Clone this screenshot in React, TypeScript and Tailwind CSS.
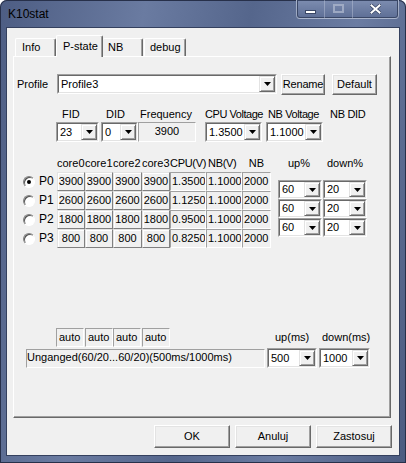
import React from "react";

function Arrow() {
  return (
    <svg width="7" height="4" viewBox="0 0 7 4">
      <path d="M0 0H7L3.5 4Z" fill="#000" />
    </svg>
  );
}

function Combo({ cls, value }: { cls: string; value: string }) {
  return (
    <div className={`flex shrink-0 box-border border border-t-[#a0a0a0] border-l-[#a0a0a0] border-r-white border-b-white ${cls}`}>
      <div className="flex flex-1 min-w-0 box-border border border-t-[#696969] border-l-[#696969] border-r-[#e3e3e3] border-b-[#e3e3e3] bg-white">
        <div className="flex-1 min-w-0 pl-[2px] flex items-center whitespace-nowrap overflow-hidden">{value}</div>
        <div className="w-[16px] shrink-0 box-border bg-[#f0f0f0] border border-t-[#e3e3e3] border-l-[#e3e3e3] border-r-[#696969] border-b-[#696969] shadow-[inset_1px_1px_0_#ffffff,inset_-1px_-1px_0_#a0a0a0] flex items-center justify-center">
          <Arrow />
        </div>
      </div>
    </div>
  );
}

function Btn({ cls, label }: { cls: string; label: string }) {
  return (
    <div className={`flex shrink-0 items-center justify-center box-border bg-[#f0f0f0] border border-t-white border-l-white border-r-[#696969] border-b-[#696969] shadow-[inset_-1px_-1px_0_#a0a0a0,inset_1px_1px_0_#e3e3e3] ${cls}`}>
      {label}
    </div>
  );
}

function Raised({ cls, value }: { cls: string; value: string }) {
  return (
    <div className={`flex shrink-0 items-center justify-center box-border bg-[#f0f0f0] border border-t-[#e3e3e3] border-l-[#e3e3e3] border-r-[#808080] border-b-[#808080] shadow-[inset_1px_1px_0_#ffffff] ${cls}`}>
      {value}
    </div>
  );
}

function Static({ cls, value, inner = "" }: { cls: string; value: string; inner?: string }) {
  return (
    <div className={`flex shrink-0 box-border bg-[#f0f0f0] border border-t-[#a0a0a0] border-l-[#a0a0a0] border-r-white border-b-white whitespace-nowrap overflow-hidden ${cls} ${inner}`}>
      {value}
    </div>
  );
}

function Radio({ on }: { on: boolean }) {
  return (
    <div className="w-[12px] h-[12px] shrink-0 rounded-full box-border border border-t-[#808080] border-l-[#808080] border-r-white border-b-white bg-white flex items-center justify-center shadow-[inset_1px_1px_0_#505050]">
      {on ? <div className="w-[4px] h-[4px] rounded-full bg-black" /> : null}
    </div>
  );
}

const rows = [
  { p: "P0", f: "3900", v: "1.3500", on: true },
  { p: "P1", f: "2600", v: "1.1250", on: false },
  { p: "P2", f: "1800", v: "0.9500", on: false },
  { p: "P3", f: "800", v: "0.8250", on: false },
];

export default function App() {
  return (
    <div className="w-[406px] h-[463px] flex flex-col rounded-t-[7px] overflow-hidden font-['Liberation_Sans',Arial,sans-serif] text-[11px] leading-[13px] text-black bg-[linear-gradient(100deg,#4d5d83_0%,#6a7ba1_30%,#55668c_52%,#6b7ca2_74%,#4b5b80_100%)] shadow-[inset_0_0_0_1px_#27304a]">
      {/* title bar */}
      <div className="h-[28px] flex items-start shrink-0">
        <div className="pl-[8px] pt-[7px] text-[12px] leading-[14px] text-black">K10stat</div>
        <div className="ml-auto mr-[7px] flex h-[19px] rounded-b-[4px] border border-t-0 border-[#d5dbe8]/50 bg-[linear-gradient(180deg,#7d8db0_0%,#5d6e95_100%)] shadow-[inset_0_0_0_1px_#3a4766]">
          <div className="w-[28px] flex items-center justify-center border-r border-[#c9d0e0]/40">
            <div className="w-[11px] h-[4px] mt-[5px] bg-white border border-[#3a4766]" />
          </div>
          <div className="w-[28px] flex items-center justify-center border-r border-[#c9d0e0]/40">
            <div className="w-[11px] h-[9px] border-2 border-[#aab4cb]/80 mb-[2px]" />
          </div>
          <div className="w-[45px] flex items-center justify-center">
            <svg width="11" height="10" viewBox="0 0 11 10">
              <path d="M1 1L10 9M10 1L1 9" stroke="#3a4766" strokeWidth="3.4" strokeLinecap="square" />
              <path d="M1.5 1.5L9.5 8.5M9.5 1.5L1.5 8.5" stroke="#ffffff" strokeWidth="2" strokeLinecap="square" />
            </svg>
          </div>
        </div>
      </div>

      {/* client */}
      <div className="mx-[7px] h-[427px] shrink-0 bg-[#f0f0f0] flex flex-col shadow-[0_0_0_1px_#34405e]">
        {/* tabs */}
        <div className="h-[28px] shrink-0 flex items-end pl-[8px]">
          <div className="w-[41px] h-[18px] box-border border-t border-l border-r border-t-white border-l-white border-r-[#696969] rounded-t-[2px] shadow-[inset_-1px_0_0_#a0a0a0] pl-[6px] flex items-center">Info</div>
          <div className="relative z-10 -mb-[1px] w-[47px] h-[22px] box-border border-t border-l border-r border-t-white border-l-white border-r-[#696969] rounded-t-[2px] shadow-[inset_-1px_0_0_#a0a0a0] bg-[#f0f0f0] pl-[6px] pt-[4px]">P-state</div>
          <div className="w-[40px] h-[18px] box-border border-t border-r border-t-white border-r-[#696969] rounded-t-[2px] shadow-[inset_-1px_0_0_#a0a0a0] pl-[5px] flex items-center">NB</div>
          <div className="ml-[1px] w-[42px] h-[18px] box-border border-t border-l border-r border-t-white border-l-white border-r-[#696969] rounded-t-[2px] shadow-[inset_-1px_0_0_#a0a0a0] pl-[5px] flex items-center">debug</div>
        </div>

        {/* panel */}
        <div className="ml-[6px] w-[378px] h-[362px] shrink-0 box-border border border-t-white border-l-white border-r-[#696969] border-b-[#696969] shadow-[inset_-1px_-1px_0_#a0a0a0] bg-[#f0f0f0] flex flex-col">
          {/* profile row */}
          <div className="mt-[17px] h-[21px] flex items-start">
            <div className="ml-[3px] w-[40px] leading-[20px]">Profile</div>
            <Combo cls="w-[220px] h-[20px]" value="Profile3" />
            <Btn cls="ml-[4px] w-[44px] h-[21px] tracking-[-0.2px]" label="Rename" />
            <Btn cls="ml-[7px] w-[45px] h-[21px]" label="Default" />
          </div>

          {/* header row */}
          <div className="mt-[12px] h-[14px] flex leading-[14px] whitespace-nowrap">
            <div className="ml-[48px] w-[44px]">FID</div>
            <div className="w-[34px]">DID</div>
            <div className="w-[65px]">Frequency</div>
            <div className="w-[63px] tracking-[-0.45px]">CPU Voltage</div>
            <div className="w-[62px] tracking-[-0.4px]">NB Voltage</div>
            <div className="tracking-[-0.3px]">NB DID</div>
          </div>

          {/* control row */}
          <div className="mt-[1px] h-[20px] flex">
            <Combo cls="ml-[42px] w-[43px] h-[20px]" value="23" />
            <Combo cls="ml-[2px] w-[37px] h-[20px]" value="0" />
            <Static cls="w-[58px] h-[20px]" inner="justify-center pt-[2px]" value="3900" />
            <Combo cls="ml-[9px] w-[57px] h-[20px]" value="1.3500" />
            <Combo cls="ml-[4px] w-[57px] h-[20px]" value="1.1000" />
          </div>

          {/* grid header */}
          <div className="mt-[14px] h-[14px] flex leading-[14px] whitespace-nowrap">
            <div className="ml-[43px] w-[28px]">core0</div>
            <div className="w-[28px]">core1</div>
            <div className="w-[29px]">core2</div>
            <div className="w-[28px]">core3</div>
            <div className="w-[38px] tracking-[-0.3px]">CPU(V)</div>
            <div className="w-[34px] tracking-[-0.3px]">NB(V)</div>
            <div className="w-[29px] text-center">NB</div>
            <div className="ml-[17px] w-[39px]">up%</div>
            <div>down%</div>
          </div>

          {/* grid */}
          <div className="mt-[2px] flex">
            <div className="flex flex-col">
              {rows.map((r) => (
                <div key={r.p} className="h-[19px] flex items-center">
                  <div className="ml-[9px] w-[34px] flex items-center">
                    <Radio on={r.on} />
                    <span className="ml-[4px] text-[12px]">{r.p}</span>
                  </div>
                  <Raised cls="w-[28px] h-[19px]" value={r.f} />
                  <Raised cls="w-[28px] h-[19px]" value={r.f} />
                  <Raised cls="w-[29px] h-[19px]" value={r.f} />
                  <Raised cls="w-[28px] h-[19px]" value={r.f} />
                  <Static cls="w-[36px] h-[19px]" inner="items-center pl-[1px]" value={r.v} />
                  <Static cls="w-[36px] h-[19px]" inner="items-center pl-[1px]" value="1.1000" />
                  <Static cls="w-[29px] h-[19px]" inner="items-center pl-[1px]" value="2000" />
                </div>
              ))}
            </div>
            <div className="ml-[7px] mt-[8px] flex flex-col">
              {[0, 1, 2].map((i) => (
                <div key={i} className="h-[19px] flex">
                  <Combo cls="w-[44px] h-[19px]" value="60" />
                  <Combo cls="ml-[1px] w-[44px] h-[19px]" value="20" />
                </div>
              ))}
            </div>
          </div>

          {/* auto row */}
          <div className="mt-[80px] h-[19px] flex items-center whitespace-nowrap">
            <Static cls="ml-[42px] w-[28px] h-[19px]" inner="items-center pl-[2px]" value="auto" />
            <Static cls="ml-[1px] w-[28px] h-[19px]" inner="items-center pl-[2px]" value="auto" />
            <Static cls="w-[28px] h-[19px]" inner="items-center pl-[2px]" value="auto" />
            <Static cls="ml-[1px] w-[28px] h-[19px]" inner="items-center pl-[2px]" value="auto" />
            <div className="ml-[105px] w-[47px]">up(ms)</div>
            <div>down(ms)</div>
          </div>

          {/* unganged row */}
          <div className="mt-[1px] h-[20px] flex">
            <Static cls="ml-[12px] mt-[1px] w-[239px] h-[19px]" inner="items-start pt-[1px]" value="Unganged(60/20...60/20)(500ms/1000ms)" />
            <Combo cls="ml-[2px] w-[50px] h-[20px]" value="500" />
            <Combo cls="ml-[2px] w-[51px] h-[20px]" value="1000" />
          </div>
        </div>

        {/* buttons */}
        <div className="mt-[7px] h-[23px] flex justify-end pr-[7px] gap-[5px]">
          <Btn cls="w-[76px] h-[23px]" label="OK" />
          <Btn cls="w-[76px] h-[23px]" label="Anuluj" />
          <Btn cls="w-[76px] h-[23px]" label="Zastosuj" />
        </div>
      </div>
    </div>
  );
}
